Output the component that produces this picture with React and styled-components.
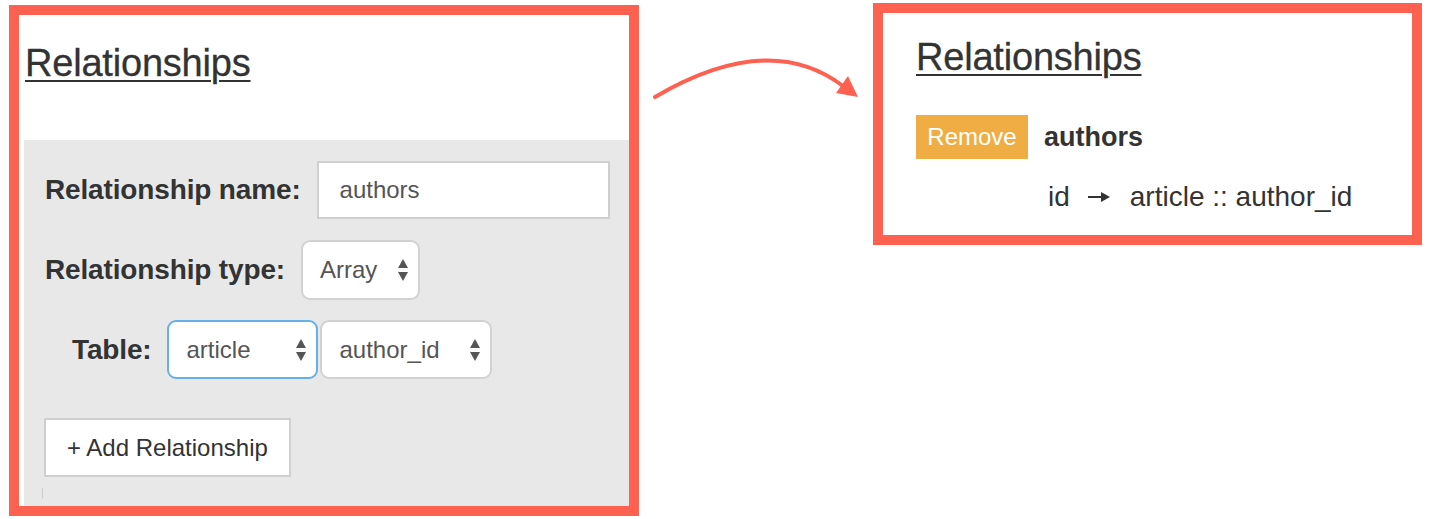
import React from 'react';
import styled, { createGlobalStyle } from 'styled-components';

const GlobalStyle = createGlobalStyle`
  html, body {
    margin: 0;
    padding: 0;
    background: #fff;
  }
  body {
    font-family: "Liberation Sans", Arial, sans-serif;
    color: #333;
  }
`;

const Page = styled.div`
  display: flex;
  align-items: flex-start;
  width: 1453px;
  height: 519px;
  overflow: hidden;
`;

const Callout = styled.section`
  box-sizing: border-box;
  display: flex;
  flex-direction: column;
  flex-shrink: 0;
  width: ${({ w }) => w}px;
  height: ${({ h }) => h}px;
  margin-top: ${({ top }) => top}px;
  margin-left: ${({ left }) => left || 0}px;
  border: 10px solid #ff6150;
  background: #fff;
`;

const Heading = styled.h2`
  margin: ${({ m }) => m};
  font-size: 38px;
  line-height: 40px;
  font-weight: 400;
  color: #333;
  text-decoration: underline;
  text-decoration-thickness: 2px;
  text-underline-offset: 4px;
  letter-spacing: -0.2px;
  -webkit-text-stroke: 0.3px #333;
`;

const FormPanel = styled.div`
  flex: 1;
  margin: 57px 0 0 5px;
  padding: 21px 0 0 21px;
  background: #e8e8e8;
  display: flex;
  flex-direction: column;
`;

const FieldRow = styled.div`
  display: flex;
  align-items: center;
  gap: 16px;
  margin-top: ${({ gap }) => gap || 0}px;
  padding-left: ${({ indent }) => indent || 0}px;
`;

const Label = styled.label`
  font-size: 28px;
  font-weight: 700;
  color: #333;
  letter-spacing: -0.15px;
`;

const TextInput = styled.div`
  box-sizing: border-box;
  width: 293px;
  height: 58px;
  padding-left: 21px;
  display: flex;
  align-items: center;
  border: 2px solid #cfcfcf;
  background: #fff;
  font-size: 24px;
  color: #555;
`;

const SelectGroup = styled.div`
  display: flex;
  gap: 2px;
`;

const Select = styled.div`
  box-sizing: border-box;
  width: ${({ w }) => w}px;
  height: ${({ h }) => h || 59}px;
  padding: 0 10px 0 17px;
  display: flex;
  align-items: center;
  justify-content: space-between;
  border: 2px solid ${({ focused }) => (focused ? '#66afe9' : '#d2d2d2')};
  border-radius: 9px;
  background: #fff;
  font-size: 24px;
  color: #555;
`;

const AddButton = styled.button`
  box-sizing: border-box;
  align-self: flex-start;
  margin: 39px 0 0 -1px;
  width: 247px;
  height: 59px;
  padding: 0 0 0 21px;
  text-align: left;
  border: 2px solid #cfcfcf;
  background: #fff;
  font-family: "Liberation Sans", Arial, sans-serif;
  font-size: 24px;
  color: #333;
`;

const CaretMark = styled.span`
  display: block;
  width: 1px;
  height: 10px;
  margin: 11px 0 0 -3px;
  background: #ccc;
`;

const ArrowArt = styled.svg`
  flex-shrink: 0;
  display: block;
`;

const RemoveRow = styled.div`
  display: flex;
  align-items: center;
  gap: 16px;
  margin: 38px 0 0 33px;
`;

const RemoveButton = styled.span`
  width: 112px;
  height: 44px;
  display: flex;
  align-items: center;
  justify-content: center;
  background: #f0ad43;
  color: #fff;
  font-size: 24px;
`;

const RelName = styled.span`
  font-size: 27px;
  font-weight: 700;
  color: #333;
`;

const Mapping = styled.div`
  display: flex;
  align-items: center;
  margin: 22px 0 0 165px;
  font-size: 28px;
  line-height: 32px;
  color: #333;
`;

const MapArrow = styled.svg`
  margin: 0 20px 0 18px;
`;

const SelectCaret = () => (
  <svg width="10" height="22" viewBox="0 0 10 22">
    <path d="M5 0 L10 9 L0 9 Z" fill="#555" />
    <path d="M0 13 L10 13 L5 22 Z" fill="#555" />
  </svg>
);

const App = () => (
  <>
    <GlobalStyle />
    <Page>
      <Callout w={630} h={511} top={5} left={9}>
        <Heading m="28px 0 0 6px">Relationships</Heading>
        <FormPanel>
          <FieldRow>
            <Label>Relationship name:</Label>
            <TextInput>authors</TextInput>
          </FieldRow>
          <FieldRow gap={21}>
            <Label>Relationship type:</Label>
            <Select w={119} h={60}>
              Array
              <SelectCaret />
            </Select>
          </FieldRow>
          <FieldRow gap={20} indent={27}>
            <Label>Table:</Label>
            <SelectGroup>
              <Select w={151} focused>
                article
                <SelectCaret />
              </Select>
              <Select w={172}>
                author_id
                <SelectCaret />
              </Select>
            </SelectGroup>
          </FieldRow>
          <AddButton type="button">+ Add Relationship</AddButton>
          <CaretMark />
        </FormPanel>
      </Callout>

      <ArrowArt width="234" height="130" viewBox="0 0 234 130">
        <path
          d="M16 97 Q130 30 204 86"
          fill="none"
          stroke="#ff6150"
          strokeWidth="4"
          strokeLinecap="round"
        />
        <path d="M219 97 L209 76 L197 93 Z" fill="#ff6150" />
      </ArrowArt>

      <Callout w={549} h={242} top={3}>
        <Heading m="24px 0 0 33px">Relationships</Heading>
        <RemoveRow>
          <RemoveButton>Remove</RemoveButton>
          <RelName>authors</RelName>
        </RemoveRow>
        <Mapping>
          id
          <MapArrow width="22" height="12" viewBox="0 0 22 12">
            <path d="M0 6 H15" stroke="#333" strokeWidth="2" />
            <path d="M13 1 L22 6 L13 11 Z" fill="#333" />
          </MapArrow>
          article :: author_id
        </Mapping>
      </Callout>
    </Page>
  </>
);

export default App;
